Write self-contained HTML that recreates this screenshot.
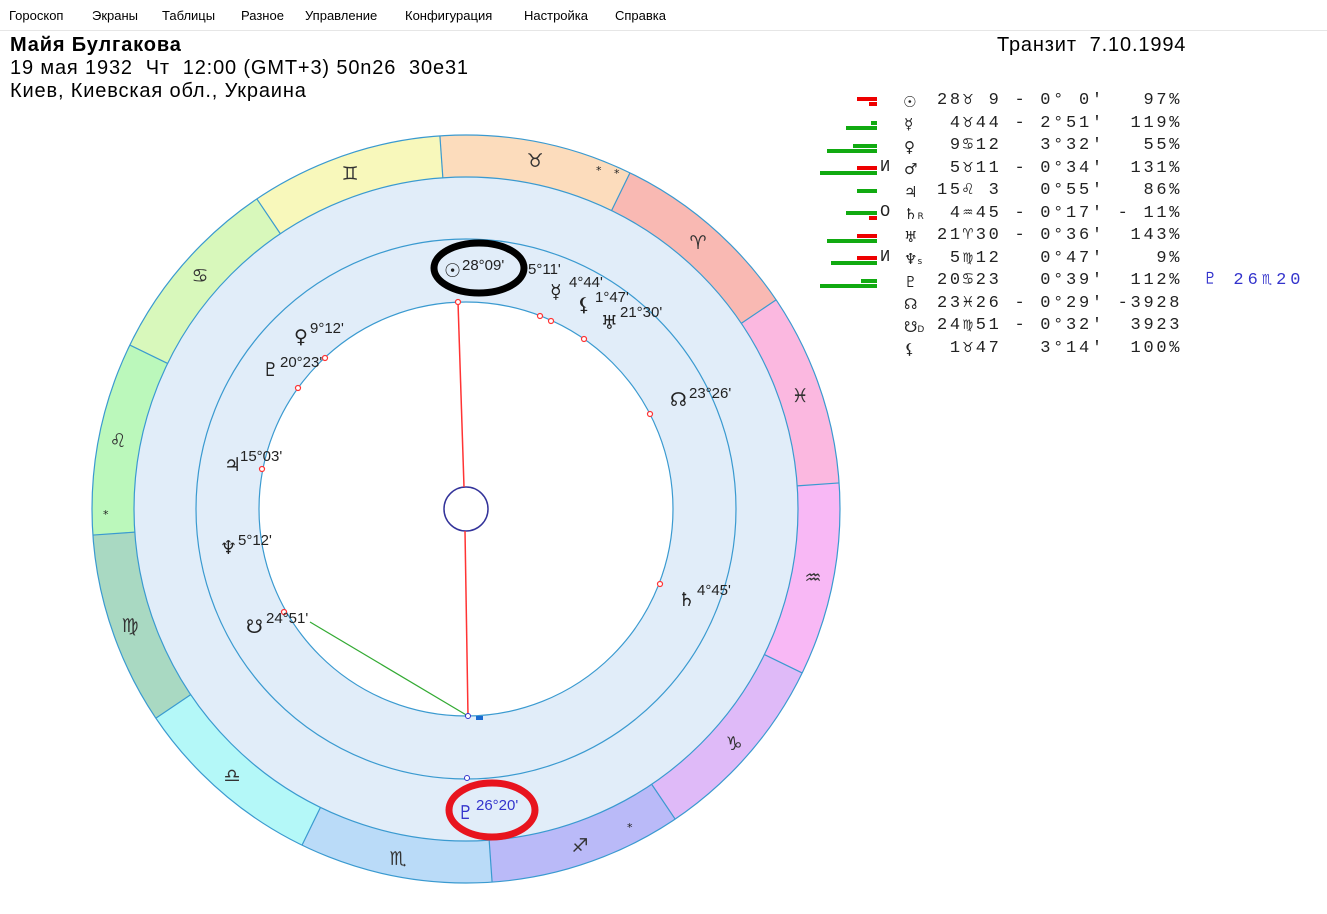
<!DOCTYPE html>
<html><head><meta charset="utf-8"><style>
body{margin:0;width:1327px;height:914px;background:#fff;position:relative;overflow:hidden;font-family:"Liberation Sans","DejaVu Sans",sans-serif}
.menu{position:absolute;left:0;top:0;width:1327px;height:30px;border-bottom:1px solid #e6e6e6;font-size:13px;color:#000}
.menu span{position:absolute;top:8px}
.h{position:absolute;font-size:20px;letter-spacing:0.85px;color:#000;white-space:nowrap}
.t{position:absolute;font-family:"Liberation Mono","DejaVu Sans Mono",monospace;font-size:17px;letter-spacing:2.7px;line-height:22.5px;color:#222;white-space:pre}
.g{position:absolute;font-family:"DejaVu Sans",sans-serif;font-size:15px;color:#222}
.b{position:absolute;height:4px}
</style></head><body>
<div class="menu">
<span style="left:9px">Гороскоп</span><span style="left:92px">Экраны</span><span style="left:162px">Таблицы</span><span style="left:241px">Разное</span><span style="left:305px">Управление</span><span style="left:405px">Конфигурация</span><span style="left:524px">Настройка</span><span style="left:615px">Справка</span>
</div>
<div class="h" style="left:10px;top:34px;font-weight:bold">Майя Булгакова</div>
<div class="h" style="left:10px;top:57px">19 мая 1932&nbsp; Чт&nbsp; 12:00 (GMT+3) 50n26&nbsp; 30e31</div>
<div class="h" style="left:10px;top:80px">Киев, Киевская обл., Украина</div>
<div class="h" style="left:997px;top:34px">Транзит&nbsp; 7.10.1994</div>

<div class="b" style="left:857px;top:97px;width:20px;background:#e00"></div><div class="b" style="left:869px;top:102px;width:8px;background:#e00"></div>
<div class="b" style="left:846px;top:126px;width:31px;background:#1a1"></div><div class="b" style="left:871px;top:121px;width:6px;background:#1a1"></div>
<div class="b" style="left:827px;top:149px;width:50px;background:#1a1"></div><div class="b" style="left:853px;top:144px;width:24px;background:#1a1"></div>
<div class="b" style="left:820px;top:171px;width:57px;background:#1a1"></div><div class="b" style="left:857px;top:166px;width:20px;background:#e00"></div>
<div class="b" style="left:857px;top:189px;width:20px;background:#1a1"></div>
<div class="b" style="left:846px;top:211px;width:31px;background:#1a1"></div><div class="b" style="left:869px;top:216px;width:8px;background:#e00"></div>
<div class="b" style="left:827px;top:239px;width:50px;background:#1a1"></div><div class="b" style="left:857px;top:234px;width:20px;background:#e00"></div>
<div class="b" style="left:831px;top:261px;width:46px;background:#1a1"></div><div class="b" style="left:857px;top:256px;width:20px;background:#e00"></div>
<div class="b" style="left:820px;top:284px;width:57px;background:#1a1"></div><div class="b" style="left:861px;top:279px;width:16px;background:#1a1"></div>
<div class="t" style="left:880px;top:157px">И</div>
<div class="t" style="left:880px;top:202px">О</div>
<div class="t" style="left:880px;top:247px">И</div>

<div class="g" style="left:903px;top:93px">☉</div>
<div class="g" style="left:904px;top:115px">☿</div>
<div class="g" style="left:904px;top:138px">♀</div>
<div class="g" style="left:904px;top:160px">♂</div>
<div class="g" style="left:904px;top:183px">♃</div>
<div class="g" style="left:904px;top:205px">♄<span style="font-size:9px">R</span></div>
<div class="g" style="left:904px;top:228px">♅</div>
<div class="g" style="left:904px;top:250px">♆<span style="font-size:9px">s</span></div>
<div class="g" style="left:904px;top:273px">♇</div>
<div class="g" style="left:904px;top:295px">☊</div>
<div class="g" style="left:904px;top:318px">☋<span style="font-size:9px">D</span></div>
<div class="g" style="left:904px;top:340px">⚸</div>
<div class="t" style="left:937px;top:90px">28♉︎ 9 - 0° 0'   97%
 4♉︎44 - 2°51'  119%
 9♋︎12   3°32'   55%
 5♉︎11 - 0°34'  131%
15♌︎ 3   0°55'   86%
 4♒︎45 - 0°17' - 11%
21♈︎30 - 0°36'  143%
 5♍︎12   0°47'    9%
20♋︎23   0°39'  112%
23♓︎26 - 0°29' -3928
24♍︎51 - 0°32'  3923
 1♉︎47   3°14'  100%</div>
<div class="t" style="left:1205px;top:270px;color:#33c;letter-spacing:4px">♇ 26♏︎20</div>

<svg style="position:absolute;left:0;top:0" width="1327" height="914" font-family="'DejaVu Sans',sans-serif">
<g fill="none" stroke-width="42">
<circle cx="466" cy="509" r="353" stroke="#fcdcbc" stroke-dasharray="184.8 2033" transform="rotate(-94 466 509)"/>
<circle cx="466" cy="509" r="353" stroke="#f9b9b3" stroke-dasharray="184.8 2033" transform="rotate(-64 466 509)"/>
<circle cx="466" cy="509" r="353" stroke="#fbb8e0" stroke-dasharray="184.8 2033" transform="rotate(-34 466 509)"/>
<circle cx="466" cy="509" r="353" stroke="#f8b8f5" stroke-dasharray="184.8 2033" transform="rotate(-4 466 509)"/>
<circle cx="466" cy="509" r="353" stroke="#dfbaf8" stroke-dasharray="184.8 2033" transform="rotate(26 466 509)"/>
<circle cx="466" cy="509" r="353" stroke="#babaf8" stroke-dasharray="184.8 2033" transform="rotate(56 466 509)"/>
<circle cx="466" cy="509" r="353" stroke="#badbf8" stroke-dasharray="184.8 2033" transform="rotate(86 466 509)"/>
<circle cx="466" cy="509" r="353" stroke="#b4f8f8" stroke-dasharray="184.8 2033" transform="rotate(116 466 509)"/>
<circle cx="466" cy="509" r="353" stroke="#a9d9c2" stroke-dasharray="184.8 2033" transform="rotate(146 466 509)"/>
<circle cx="466" cy="509" r="353" stroke="#bbf8bb" stroke-dasharray="184.8 2033" transform="rotate(176 466 509)"/>
<circle cx="466" cy="509" r="353" stroke="#d8f8bb" stroke-dasharray="184.8 2033" transform="rotate(206 466 509)"/>
<circle cx="466" cy="509" r="353" stroke="#f8f8bb" stroke-dasharray="184.8 2033" transform="rotate(236 466 509)"/>
</g>
<g stroke="#3a9ad0" stroke-width="1.2">
<line x1="466" y1="177" x2="466" y2="135" transform="rotate(-4 466 509)"/>
<line x1="466" y1="177" x2="466" y2="135" transform="rotate(26 466 509)"/>
<line x1="466" y1="177" x2="466" y2="135" transform="rotate(56 466 509)"/>
<line x1="466" y1="177" x2="466" y2="135" transform="rotate(86 466 509)"/>
<line x1="466" y1="177" x2="466" y2="135" transform="rotate(116 466 509)"/>
<line x1="466" y1="177" x2="466" y2="135" transform="rotate(146 466 509)"/>
<line x1="466" y1="177" x2="466" y2="135" transform="rotate(176 466 509)"/>
<line x1="466" y1="177" x2="466" y2="135" transform="rotate(206 466 509)"/>
<line x1="466" y1="177" x2="466" y2="135" transform="rotate(236 466 509)"/>
<line x1="466" y1="177" x2="466" y2="135" transform="rotate(266 466 509)"/>
<line x1="466" y1="177" x2="466" y2="135" transform="rotate(296 466 509)"/>
<line x1="466" y1="177" x2="466" y2="135" transform="rotate(326 466 509)"/>
</g>
<circle cx="466" cy="509" r="374" fill="none" stroke="#3a9ad0" stroke-width="1.2"/>
<circle cx="466" cy="509" r="332" fill="#e1edf9" stroke="#3a9ad0" stroke-width="1.2"/>
<circle cx="466" cy="509" r="270" fill="none" stroke="#3a9ad0" stroke-width="1.2"/>
<circle cx="466" cy="509" r="207" fill="#fff" stroke="#3a9ad0" stroke-width="1.2"/>
<circle cx="466" cy="509" r="22" fill="#fff" stroke="#33339a" stroke-width="1.5"/>
<line x1="458" y1="302" x2="464" y2="487" stroke="#f33" stroke-width="1.5"/>
<line x1="465" y1="531" x2="468" y2="716" stroke="#f33" stroke-width="1.5"/>
<line x1="310" y1="622" x2="468" y2="716" stroke="#3a3" stroke-width="1.2"/>
<g fill="#fff" stroke="#f33" stroke-width="1.2">
<circle cx="458" cy="302" r="2.5"/><circle cx="540" cy="316" r="2.5"/><circle cx="551" cy="321" r="2.5"/><circle cx="584" cy="339" r="2.5"/><circle cx="650" cy="414" r="2.5"/><circle cx="660" cy="584" r="2.5"/><circle cx="325" cy="358" r="2.5"/><circle cx="298" cy="388" r="2.5"/><circle cx="262" cy="469" r="2.5"/><circle cx="284" cy="612" r="2.5"/>
</g>
<circle cx="468" cy="716" r="2.5" fill="#fff" stroke="#33c"/><rect x="476" y="716" width="7" height="4" fill="#1a6ad0"/>
<circle cx="467" cy="778" r="2.5" fill="#fff" stroke="#33c"/>
<g font-size="19" fill="#333" text-anchor="middle">
<text x="535" y="167">♉︎</text><text x="698" y="249">♈︎</text><text x="800" y="402">♓︎</text><text x="813" y="584">♒︎</text><text x="734" y="750">♑︎</text><text x="580" y="852">♐︎</text><text x="398" y="865">♏︎</text><text x="232" y="782">♎︎</text><text x="130" y="632">♍︎</text><text x="118" y="447">♌︎</text><text x="200" y="282">♋︎</text><text x="350" y="180">♊︎</text>
</g>
<g font-size="11" fill="#222"><text x="596" y="174">*</text><text x="614" y="177">*</text><text x="103" y="518">*</text><text x="627" y="831">*</text></g>
<g font-size="15" fill="#222" font-family="'Liberation Sans',sans-serif">
<text x="444" y="277" font-size="19" font-family="DejaVu Sans">☉</text><text x="462" y="270">28°09'</text>
<text x="528" y="274">5°11'</text>
<text x="550" y="298" font-size="19" font-family="DejaVu Sans">☿</text><text x="569" y="287">4°44'</text>
<text x="577" y="311" font-size="19" font-family="DejaVu Sans">⚸</text><text x="595" y="302">1°47'</text>
<text x="601" y="329" font-size="19" font-family="DejaVu Sans">♅</text><text x="620" y="317">21°30'</text>
<text x="294" y="343" font-size="19" font-family="DejaVu Sans">♀</text><text x="310" y="333">9°12'</text>
<text x="262" y="376" font-size="19" font-family="DejaVu Sans">♇</text><text x="280" y="367">20°23'</text>
<text x="670" y="406" font-size="19" font-family="DejaVu Sans">☊</text><text x="689" y="398">23°26'</text>
<text x="224" y="471" font-size="19" font-family="DejaVu Sans">♃</text><text x="240" y="461">15°03'</text>
<text x="220" y="554" font-size="19" font-family="DejaVu Sans">♆</text><text x="238" y="545">5°12'</text>
<text x="678" y="606" font-size="19" font-family="DejaVu Sans">♄</text><text x="697" y="595">4°45'</text>
<text x="246" y="633" font-size="19" font-family="DejaVu Sans">☋</text><text x="266" y="623">24°51'</text>
<text x="457" y="819" font-size="19" font-family="DejaVu Sans" fill="#33c">♇</text><text x="476" y="810" fill="#33c">26°20'</text>
</g>
<ellipse cx="479" cy="268" rx="45" ry="25" fill="none" stroke="#000" stroke-width="7"/>
<ellipse cx="492" cy="810" rx="43" ry="27" fill="none" stroke="#e8141e" stroke-width="7"/>
</svg>
</body></html>
